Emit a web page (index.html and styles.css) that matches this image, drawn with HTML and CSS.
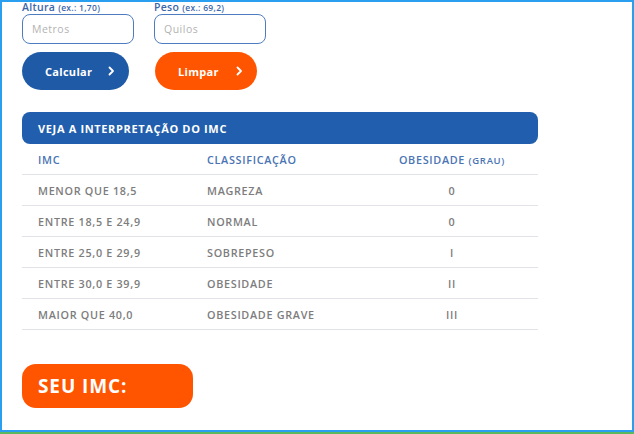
FILE: index.html
```html
<!DOCTYPE html>
<html lang="pt-BR">
<head>
<meta charset="utf-8">
<title>Calculadora de IMC</title>
<link rel="stylesheet" href="styles.css">
</head>
<body>
<div class="frame">
  <div class="page">
    <div class="fields">
      <div class="field">
        <label class="label">Altura <small>(ex.: 1,70)</small></label>
        <input class="input" type="text" placeholder="Metros">
      </div>
      <div class="field">
        <label class="label">Peso <small>(ex.: 69,2)</small></label>
        <input class="input" type="text" placeholder="Quilos">
      </div>
    </div>
    <div class="actions">
      <button class="btn btn-blue">Calcular<svg class="chev" width="7" height="10" viewBox="0 0 7 10"><path d="M1.5 1.5 L5 5 L1.5 8.5" fill="none" stroke="#fff" stroke-width="1.8" stroke-linecap="round" stroke-linejoin="round"/></svg></button>
      <button class="btn btn-orange">Limpar<svg class="chev" width="7" height="10" viewBox="0 0 7 10"><path d="M1.5 1.5 L5 5 L1.5 8.5" fill="none" stroke="#fff" stroke-width="1.8" stroke-linecap="round" stroke-linejoin="round"/></svg></button>
    </div>
    <div class="table">
      <div class="table-title">VEJA A INTERPRETAÇÃO DO IMC</div>
      <div class="row head"><span>IMC</span><span>CLASSIFICAÇÃO</span><span class="c3">OBESIDADE <small>(GRAU)</small></span></div>
      <div class="row"><span>MENOR QUE 18,5</span><span>MAGREZA</span><span class="c3">0</span></div>
      <div class="row"><span>ENTRE 18,5 E 24,9</span><span>NORMAL</span><span class="c3">0</span></div>
      <div class="row"><span>ENTRE 25,0 E 29,9</span><span>SOBREPESO</span><span class="c3">I</span></div>
      <div class="row"><span>ENTRE 30,0 E 39,9</span><span>OBESIDADE</span><span class="c3">II</span></div>
      <div class="row"><span>MAIOR QUE 40,0</span><span>OBESIDADE GRAVE</span><span class="c3">III</span></div>
    </div>
    <div class="result">SEU IMC:</div>
  </div>
</div>
</body>
</html>
```
FILE: styles.css
```css
* { box-sizing: border-box; }
html, body { margin: 0; padding: 0; background: #fff; }
body { font-family: "Open Sans", "DejaVu Sans", sans-serif; }
.frame {
  width: 634px;
  height: 434px;
  border-bottom: 2px solid #5cb85f;
  overflow: hidden;
}
.page {
  height: 432px;
  border: 2px solid #2a9ff0;
  padding: 0 20px;
  overflow: hidden;
}
.fields { display: flex; gap: 20px; margin-top: -1px; }
.field { display: flex; flex-direction: column; width: 112px; }
.label { font-size: 10.5px; font-weight: 600; color: #3a66aa; line-height: 12px; height: 12px; white-space: nowrap; letter-spacing: 0.3px; }
.label small { font-size: 8.5px; }
.input {
  margin-top: 1px;
  width: 112px;
  height: 30px;
  border: 1px solid #4d7dc0;
  border-radius: 8px;
  padding: 0 0 1px 9px;
  font-family: "Open Sans", sans-serif;
  font-size: 10.5px;
  letter-spacing: 0.5px;
  outline: none;
}
.input::placeholder { color: #b3b3b3; }
.actions { display: flex; gap: 26px; margin-top: 8px; }
.btn {
  height: 38px;
  border: none;
  border-radius: 19px;
  display: flex;
  align-items: center;
  padding: 0 0 0 23px;
  color: #fff;
  font-family: "Open Sans", sans-serif;
  font-weight: 700;
  font-size: 11px;
  letter-spacing: 0.3px;
}
.btn-blue { width: 107px; background: #1f5aa7; }
.btn-orange { width: 102px; background: #ff5500; }
.btn-blue .chev { margin-left: 16px; }
.btn-orange .chev { margin-left: 17px; }
.table { width: 516px; margin-top: 22px; }
.table-title {
  height: 32px;
  background: #215ead;
  border-radius: 8px;
  color: #fff;
  font-weight: 700;
  font-size: 11px;
  letter-spacing: 0.65px;
  display: flex;
  align-items: center;
  padding-left: 16px;
}
.row {
  display: grid;
  grid-template-columns: 169px 175px 172px;
  height: 31px;
  align-items: center;
  border-bottom: 1px solid #e1e3e8;
  font-size: 10.8px;
  font-weight: 600;
  letter-spacing: 0.7px;
  color: #7d7d7d;
}
.row span { padding-left: 16px; }
.row .c3 { padding-left: 0; text-align: center; }
.row.head { color: #4a74b4; }
.row.head small { font-size: 9.5px; }
.result {
  margin-top: 34px;
  width: 171px;
  height: 44px;
  background: #ff5500;
  border-radius: 14px;
  color: #fff;
  font-weight: 700;
  font-size: 19px;
  letter-spacing: 0.9px;
  display: flex;
  align-items: center;
  padding-left: 16px;
}
```
